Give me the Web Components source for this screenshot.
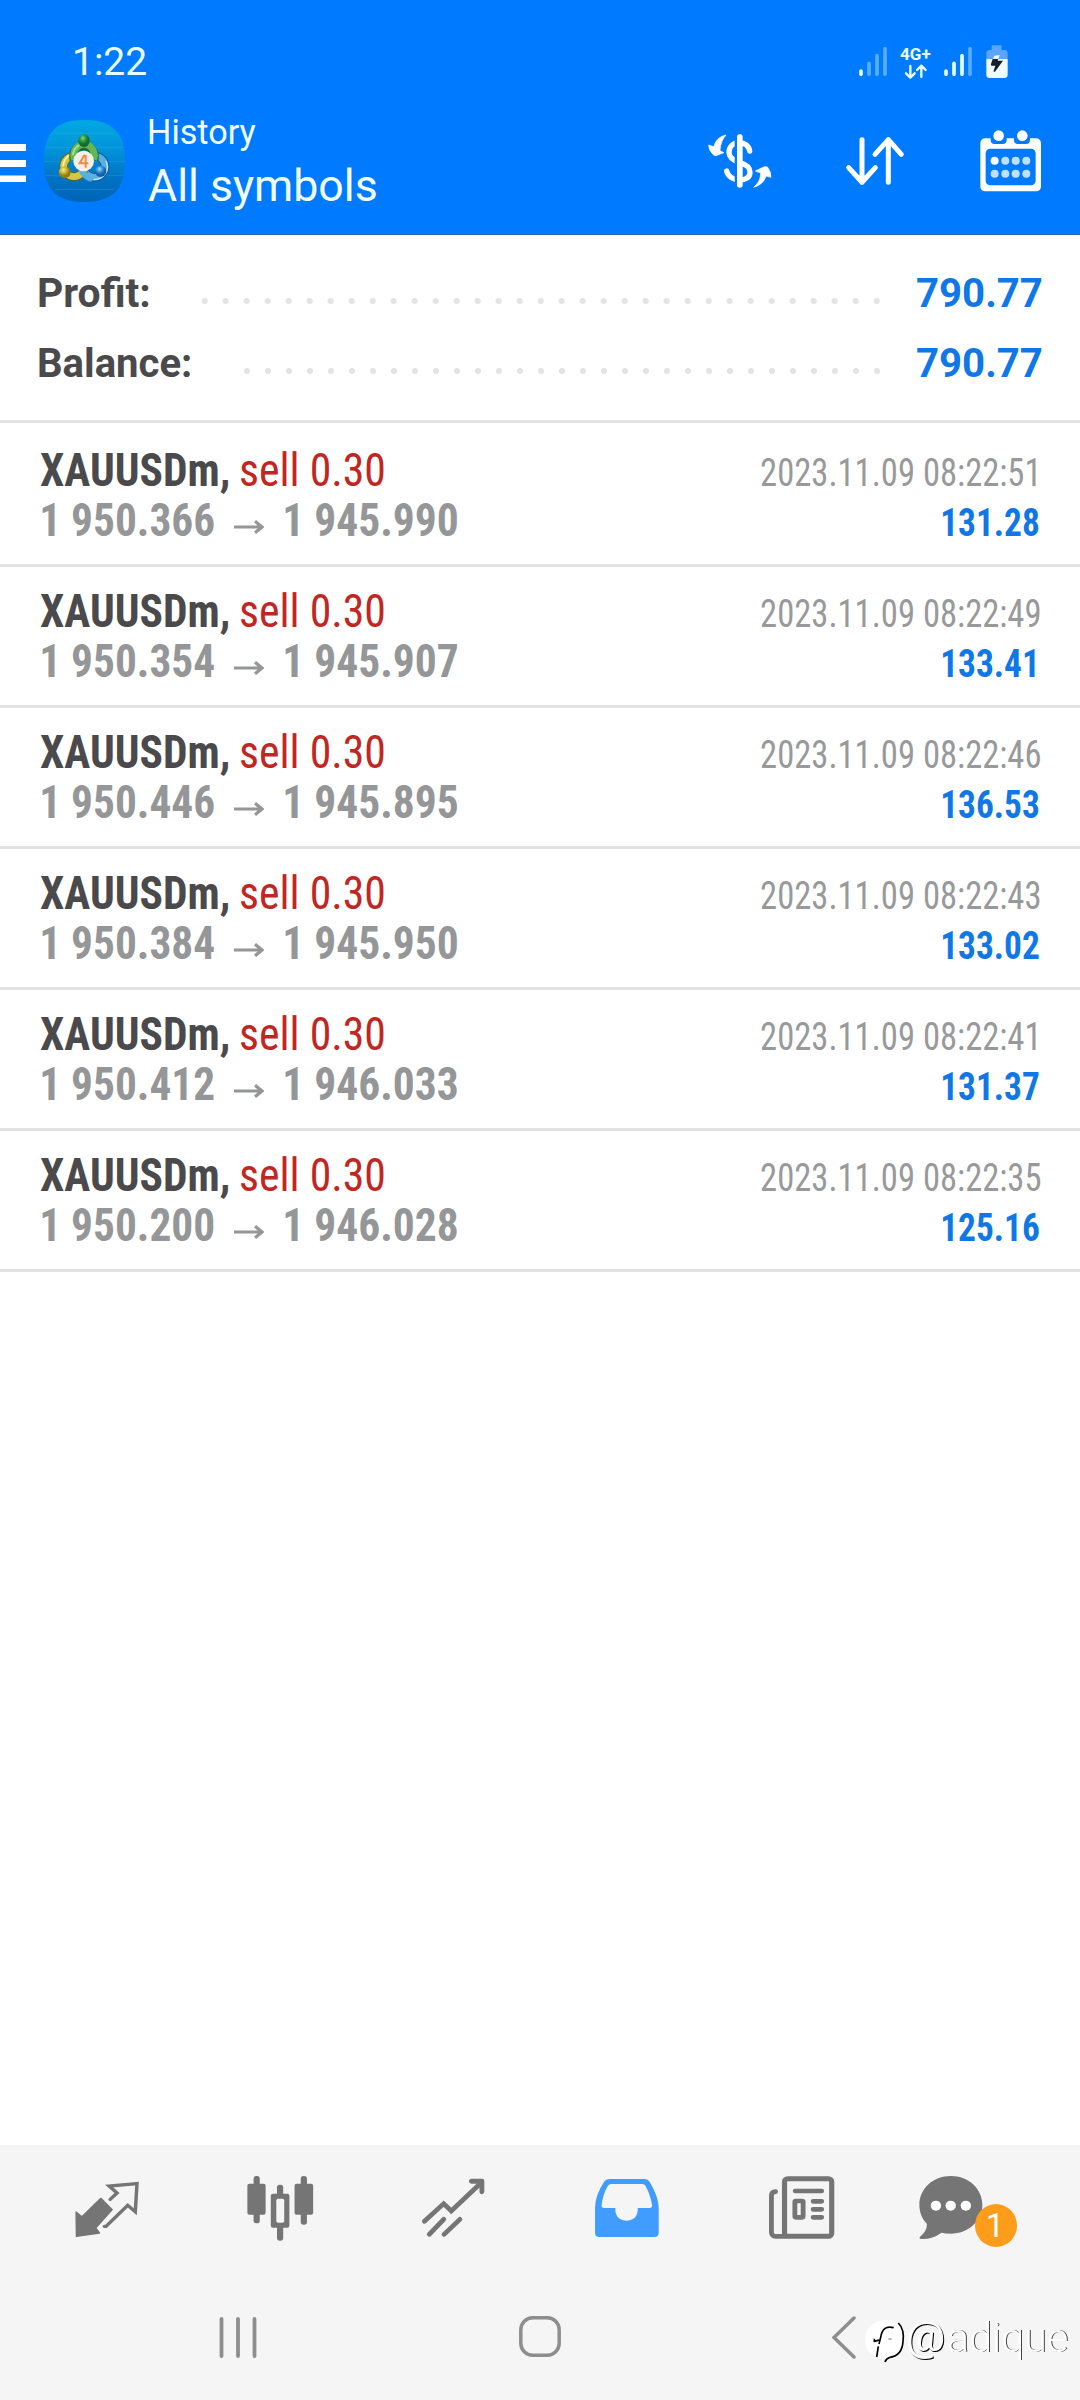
<!DOCTYPE html>
<html lang="en">
<head>
<meta charset="utf-8">
<title>History</title>
<style>
html,body{margin:0;padding:0;background:#fff}
body{width:1080px;height:2400px;overflow:hidden;font-family:Roboto,"Liberation Sans",sans-serif}
</style>
</head>
<body>
<history-app></history-app>
<script>
const ctx = document.createElement('canvas').getContext('2d');

// A line of text whose visible width is w and whose box is exactly the cap height.
class InkText extends HTMLElement {
  connectedCallback() {
    const a = (n, d) => this.getAttribute(n) ?? d;
    const size = +a('size', 40), w = +a('w', 100), weight = a('weight', 400), text = this.textContent;
    const fam = 'Roboto, "Liberation Sans", sans-serif';
    const stretch = a('stretch', 'normal');
    ctx.font = `normal ${weight} ${stretch === 'normal' ? '' : stretch + ' '}${size}px ${fam}`;
    const m = ctx.measureText(a('ref', text));
    const k = w / (m.actualBoundingBoxLeft + m.actualBoundingBoxRight);
    const h = size * .711;
    this.attachShadow({mode: 'open'}).innerHTML = `<style>
      :host{display:block;flex:none;width:${w}px;height:${h}px}
      svg{display:block;overflow:visible;width:100%;height:100%}
      text{font:${weight} ${size}px ${fam};font-stretch:${stretch};fill:currentColor;white-space:pre}
      </style><svg><text transform="translate(${m.actualBoundingBoxLeft * k} ${h}) scale(${k} 1)"></text></svg>`;
    this.shadowRoot.querySelector('text').textContent = text;
  }
}
customElements.define('ink-text', InkText);

// name: [viewBox, width, height, markup]
const ICONS = {
  menu: ['0 0 26 38', 26, 38, `<path fill="#fff" d="M0 0h26v7H0zM0 16h26v7H0zM0 31.5h26v7H0z"/>`],
  logo: ['42 30 243 246', 81, 82, `
    <defs>
      <linearGradient id="bg" x2="0" y2="1"><stop offset="0" stop-color="#02a9e0"/><stop offset=".35" stop-color="#0294db"/><stop offset=".7" stop-color="#0073c4"/><stop offset="1" stop-color="#0064b4"/></linearGradient>
      <radialGradient id="g" cx=".4" cy=".3"><stop offset="0" stop-color="#8fd67c"/><stop offset=".5" stop-color="#2f9b3c"/><stop offset="1" stop-color="#146b2b"/></radialGradient>
      <radialGradient id="y" cx=".4" cy=".3"><stop offset="0" stop-color="#f6ee90"/><stop offset=".5" stop-color="#cdb932"/><stop offset="1" stop-color="#8d7c16"/></radialGradient>
      <radialGradient id="b" cx=".4" cy=".3"><stop offset="0" stop-color="#a8dcfb"/><stop offset=".5" stop-color="#3c97d8"/><stop offset="1" stop-color="#0e5fa8"/></radialGradient>
    </defs>
    <path fill="url(#bg)" d="M163 30C245 30 285 66 285 153S245 276 163 276 42 240 42 153 81 30 163 30Z"/>
    <path stroke="#46b8ea" stroke-opacity=".4" stroke-width="2" d="M75 70H252M46 112H281M42 155H285M46 196H281M75 238H252"/>
    <g fill="none">
      <circle cx="193" cy="170" r="32" stroke="#0b579a" stroke-width="26"/>
      <circle cx="193" cy="170" r="32" stroke="#5aafe2" stroke-width="20"/>
      <path stroke="#c2e4f7" stroke-width="4" d="M228 153A38 38 0 0 1 190 208"/>
      <circle cx="132" cy="169" r="31" stroke="#5d6420" stroke-width="26"/>
      <circle cx="132" cy="169" r="31" stroke="#d3c74a" stroke-width="20"/>
      <path stroke="#f6f0ae" stroke-width="5" d="M100 170A35 35 0 0 1 124 134"/>
      <path stroke="#1c6733" stroke-width="27" d="M132 150A31 34 0 1 1 192 150"/>
      <path stroke="#62b757" stroke-width="21" d="M133 149A31 34 0 1 1 191 149"/>
      <path stroke="#b7e0a8" stroke-width="5" d="M129 136A37 37 0 0 1 148 105"/>
      <path stroke="#5aafe2" stroke-width="18" d="M153 176Q160 200 186 207"/>
    </g>
    <ellipse cx="162" cy="92" rx="17" ry="19" fill="url(#g)"/>
    <circle cx="104" cy="187" r="18" fill="url(#y)"/>
    <circle cx="212" cy="184" r="17" fill="url(#b)"/>
    <circle cx="161" cy="153" r="31" fill="#f3efe9"/>
    <path fill="none" stroke="#ee8c42" stroke-width="6" d="M164 134L149 160H175M167 135V173"/>`],
  dollar: ['80 400 198 168', 66, 56, `
    <path fill="none" stroke="#fff" stroke-width="16" stroke-linecap="round" d="M208 454C206 438 192 429 178 429C158 429 146 441 146 458C146 474 158 482 178 489C199 495 209 502 209 518C209 534 196 541 178 541C158 541 142 529 139 514"/>
    <path fill="#007aff" d="M163 415h22v138h-22z"/><rect x="170" y="404" width="17" height="160" rx="7" fill="#fff"/>
    <path fill="#fff" stroke="#fff" stroke-width="2" stroke-linejoin="round" d="M137 406C117 410 104 424 101 441L85 436Q85 451 96 462Q101 469 107 468L131 459L119 453C120 432 127 418 137 406ZM220 563C240 557 253 545 257 529L272 533Q272 516 262 503Q257 500 252 501L225 514L241 520C240 541 232 552 220 563Z"/>`],
  sort: ['496 406 180 154', 60, 51.3, `<path fill="none" stroke="#fff" stroke-width="15" stroke-linecap="round" stroke-linejoin="round" d="M547 420V548M507 504L547 548L587 504M626 548V420M586 464L626 420L665 464"/>`],
  calendar: ['896 386 190 190', 63.3, 63.3, `
    <rect x="900" y="414" width="182" height="159" rx="14" fill="#fff"/>
    <path fill="#007aff" d="M931 410h48v9q0 12-12 12h-24q-12 0-12-12zM1001 410h48v9q0 12-12 12h-24q-12 0-12-12z"/>
    <rect x="916" y="445" width="150" height="110" rx="14" fill="#007aff"/>
    <circle cx="955" cy="406" r="16" fill="#fff"/><circle cx="1026" cy="406" r="16" fill="#fff"/>
    <g fill="#bfe1ff"><circle cx="943" cy="481" r="12" fill="#fff"/><circle cx="975" cy="481" r="12"/><circle cx="1006" cy="481" r="12"/><circle cx="1038" cy="481" r="12"/><circle cx="943" cy="520" r="12"/><circle cx="975" cy="520" r="12"/><circle cx="1006" cy="520" r="12"/><circle cx="1038" cy="520" r="12"/></g>`],
  signal1: ['540 138 84 92', 28, 30.7, `<path stroke="#59aeff" stroke-width="11" stroke-linecap="round" d="M570 190V223M594 167V223M618 146V223"/><path stroke="#e8ffff" stroke-width="11" stroke-linecap="round" d="M546 213V223"/>`],
  signal2: ['792 138 84 92', 28, 30.7, `<path stroke="#59aeff" stroke-width="11" stroke-linecap="round" d="M870 146V223"/><path stroke="#e8ffff" stroke-width="11" stroke-linecap="round" d="M798 213V223M822 190V223M846 167V223"/>`],
  data: ['672 190 72 46', 24, 15.3, `<path fill="none" stroke="#e8ffff" stroke-width="7" stroke-linecap="round" stroke-linejoin="round" d="M691 196V231M678 218L691 231L704 218M724 229V195M711 208L724 195L737 208"/>`],
  battery: ['920 135 66 100', 22, 33.3, `<path fill="#59a5ff" d="M937 140q0-4 4-4h22q4 0 4 4v10h8q10 0 10 10v17H921v-17q0-10 10-10h6z"/><path fill="#f0fbff" d="M921 177h64v47q0 10-10 10h-44q-10 0-10-10zM945 167l16-2-4 12h-16z"/><path fill="#14202b" d="M940 177H957L955 182H971L947 215Q942 217 943 212L948 197H937Q933 196 935 192Z"/>`],
  quotes: ['216 150 194 174', 66.8, 58, `<path fill="none" stroke="#757575" stroke-width="10" stroke-linejoin="miter" stroke-linecap="round" d="M321 208L341 189L318 168L399 161L394 245L372 226L309 289H304"/><path fill="#757575" stroke="#757575" stroke-width="4" stroke-linejoin="round" d="M294 205L327 239L279 294L290 309L223 319L222 246L239 260Z"/>`],
  candles: ['714 136 198 200', 68.2, 66.7, `<g fill="#757575"><rect x="718" y="162" width="53" height="93" rx="6"/><rect x="855" y="162" width="54" height="93" rx="6"/><rect x="736" y="139" width="18" height="142" rx="8"/><rect x="873" y="139" width="18" height="146" rx="8"/><rect x="804" y="165" width="18" height="168" rx="8"/><rect x="786" y="192" width="54" height="102" rx="6"/></g><rect x="802" y="207" width="23" height="72" rx="5" fill="#f5f5f5"/>`],
  trend: ['1222 142 188 184', 64.7, 61.3, `<path fill="none" stroke="#757575" stroke-width="14" stroke-linecap="round" d="M1232 275L1288 222L1310 244L1396 160M1246 314L1288 269M1289 314L1335 269"/><path fill="#757575" d="M1368 147H1400Q1406 147 1406 154V187Q1404 194 1398 194Q1392 193 1392 187V162H1368Q1361 160 1361 154Q1362 148 1368 147Z"/>`],
  inbox: ['158 144 190 180', 65.4, 60, `<path fill="#419cff" fill-rule="evenodd" d="M204 147H304Q315 147 320 156Q345 200 346 232V308Q346 321 333 321H174Q161 321 161 308V232Q162 195 187 156Q192 147 204 147ZM208 162Q202 162 198 168Q183 195 180 226Q180 234 187 234H220V241C221 283 284 283 285 241V234H320Q327 234 327 226Q322 195 308 168Q305 162 298 162Z"/>`],
  news: ['662 136 196 196', 67.5, 65.3, `<g fill="none" stroke="#757575" stroke-linecap="round"><rect x="710" y="147" width="137" height="173" rx="9" stroke-width="15"/><path stroke-width="14" d="M684 186Q672 187 672 198V309Q673 320 684 320H712M741 184H818M793 215H818M793 239H818M793 263H818"/><rect x="740" y="214" width="24" height="49" rx="3" stroke-width="14"/></g>`],
  chat: ['1098 136 190 196', 65.4, 65.3, `<path fill="#757575" d="M1193 139C1246 139 1285 178 1285 226C1285 274 1244 312 1193 312Q1178 312 1166 309Q1140 329 1108 328Q1099 326 1104 321Q1124 305 1124 283C1110 268 1102 249 1102 226C1102 178 1141 139 1193 139Z"/><g fill="#fff"><ellipse cx="1150" cy="228" rx="15" ry="15"/><ellipse cx="1193" cy="228" rx="15" ry="15"/><ellipse cx="1237" cy="228" rx="15" ry="15"/></g>`],
  arrow: ['0 0 30 14', 30, 14, `<path fill="none" stroke="#949698" stroke-width="3.2" d="M0 7H28M21 1.2L28 7L21 12.8"/>`],
  recents: ['0 0 38 41', 38, 41, `<path stroke="#8e8e8e" stroke-width="3.8" stroke-linecap="round" d="M2.5 2V39M19 2V39M35.5 2V39"/>`],
  home: ['0 0 42 41', 42, 41, `<rect x="1.8" y="1.8" width="38.4" height="37.4" rx="12" fill="none" stroke="#8e8e8e" stroke-width="3.5"/>`],
  back: ['0 0 24 43', 24, 43, `<path fill="none" stroke="#8e8e8e" stroke-width="3.5" stroke-linecap="round" d="M22 2L2 21.5L22 41"/>`],
  mark: ['72 55 126 138', 42, 46, `<path fill="#fff" d="M136 62C170 60 192 82 192 117C192 152 170 172 148 176L136 184L134 174C98 176 75 152 75 120C75 86 100 62 136 62Z"/><path fill="none" stroke="#000" stroke-width="5" d="M175 70C189 84 192 104 189 126C187 155 172 170 150 173Q138 177 135 187M161 84C138 78 126 88 122 113L117 133M115 140L110 172M103 117V127M103 125L118 121"/><path stroke="#555" stroke-width="2.5" d="M145 118h10"/>`]
};
class UiIcon extends HTMLElement {
  connectedCallback() {
    const [vb, w, h, body] = ICONS[this.getAttribute('name')];
    this.attachShadow({mode: 'open'}).innerHTML = `<style>:host{display:block;flex:none;width:${w}px;height:${h}px}svg{display:block;width:100%;height:100%}</style><svg viewBox="${vb}" preserveAspectRatio="none">${body}</svg>`;
  }
}
customElements.define('ui-icon', UiIcon);

const define = (tag, html) => customElements.define(tag, class extends HTMLElement {
  connectedCallback() {
    this.attachShadow({mode: 'open'}).innerHTML = typeof html === 'function' ? html(this) : html;
  }
});

define('status-bar', `<style>
  :host{display:flex;box-sizing:border-box;height:100px;padding:45px 72px 0 75px;color:#e8ffff;align-items:flex-start}
  .sys{display:flex;margin-left:auto;align-items:flex-start}
  .net{display:flex;flex-direction:column;gap:4.4px;margin:3.7px 12.3px 0 13px;width:31px;align-items:center}
  </style>
  <ink-text size="39.5" w="71" style="margin-top:1.5px">1:22</ink-text>
  <div class="sys">
    <ui-icon name="signal1" style="margin-top:1px"></ui-icon>
    <div class="net"><ink-text size="16" weight="700" w="31">4G+</ink-text><ui-icon name="data"></ui-icon></div>
    <ui-icon name="signal2" style="margin-top:1px"></ui-icon>
    <ui-icon name="battery" style="margin-left:14.3px"></ui-icon>
  </div>`);

define('app-bar', `<style>
  :host{display:flex;box-sizing:border-box;height:135px;padding:20px 38px 0 0;align-items:flex-start;color:#fff;border-bottom:1.5px solid #2268ae}
  .t{display:flex;flex-direction:column;gap:26.7px;margin:-1px 0 0 24px;color:#f2ffff}
  .a{display:flex;margin-left:auto;align-items:flex-start}
  </style>
  <ui-icon name="menu" style="margin-top:24px"></ui-icon>
  <ui-icon name="logo" style="margin-left:18px"></ui-icon>
  <div class="t"><ink-text size="34.5" w="106.5">History</ink-text><ink-text size="44" w="228" style="margin-left:-1.5px">All symbols</ink-text></div>
  <div class="a">
    <ui-icon name="dollar" style="margin-top:13.3px"></ui-icon>
    <ui-icon name="sort" style="margin:15.3px 0 0 72.6px"></ui-icon>
    <ui-icon name="calendar" style="margin:8.7px 0 0 73.4px"></ui-icon>
  </div>`);

define('summary-line', el => `<style>
  :host{display:flex;height:70px;align-items:flex-start;color:#4a4a4c}
  .dots{flex:1;height:6px;margin:20.2px 37px 0 52px;background:radial-gradient(circle at 18px 3px,#e4e4e4 2.7px,transparent 3.4px) right top/21px 6px repeat-x}
  .v{color:#1078e6}
  </style>
  <ink-text size="40.5" weight="700" w="${el.getAttribute('w')}">${el.getAttribute('label')}</ink-text>
  <div class="dots"></div>
  <ink-text class="v" size="40.5" weight="700" w="124.7">${el.getAttribute('value')}</ink-text>`);

define('trade-row', el => {
  const [open, close, time, profit] = el.textContent.split('|');
  return `<style>
  :host{display:flex;justify-content:space-between;box-sizing:border-box;height:141px;padding:27.5px 41px 0;border-bottom:3px solid #e3e3e3}
  .l,.r{display:flex;flex-direction:column}
  .l{gap:18.4px}
  .r{gap:23.2px;padding-top:5.4px;align-items:flex-end}
  .line{display:flex;align-items:flex-start}
  .sym{color:#4a4a4c;margin-left:-1px}.side{color:#c22623;margin-left:12.7px}
  .price{color:#949698}.time{color:#98999b;margin-right:4px}.profit{color:#1078e6}
  </style>
  <div class="l">
    <div class="line"><ink-text class="sym" size="45.5" weight="700" stretch="condensed" w="188.3">XAUUSDm,</ink-text><ink-text class="side" size="45.5" stretch="condensed" w="142.6">sell 0.30</ink-text></div>
    <div class="line price" style="padding-left:1.2px"><ink-text size="45.5" weight="700" stretch="condensed" ref="1 950.366" w="172.3">${open}</ink-text><ui-icon name="arrow" style="margin:16px 20.4px 0 20px"></ui-icon><ink-text size="45.5" weight="700" stretch="condensed" ref="1 945.990" w="172">${close}</ink-text></div>
  </div>
  <div class="r">
    <ink-text class="time" size="38" stretch="condensed" ref="2023.11.09 08:22:51" w="274.5">${time}</ink-text>
    <ink-text class="profit" size="38" weight="700" stretch="condensed" ref="131.28" w="96.7">${profit}</ink-text>
  </div>`;
});

define('tab-bar', `<style>
  :host{display:flex;box-sizing:border-box;height:135px;padding-left:74.4px;align-items:flex-start;background:#f5f5f5}
  .chat{position:relative;margin:30.3px 0 0 82.5px}
  .badge{position:absolute;left:56.8px;top:28.5px;width:42px;height:43px;border-radius:50%;background:#ff9c1a;color:#fff;display:flex;align-items:center;justify-content:center}
  </style>
  <ui-icon name="quotes" style="margin-top:35px"></ui-icon>
  <ui-icon name="candles" style="margin:30.3px 0 0 104.7px"></ui-icon>
  <ui-icon name="trend" style="margin:32.3px 0 0 106.7px"></ui-icon>
  <ui-icon name="inbox" style="margin:33px 0 0 109px"></ui-icon>
  <ui-icon name="news" style="margin:30.3px 0 0 108.1px"></ui-icon>
  <div class="chat"><ui-icon name="chat"></ui-icon><div class="badge"><ink-text size="33.8" w="10.5" style="margin-right:4px">1</ink-text></div></div>`);

define('nav-bar', `<style>
  :host{display:flex;box-sizing:border-box;height:120px;padding:36.5px 0 0 219px;align-items:flex-start;background:#f5f5f5}
  .wm{display:flex;align-items:flex-start;margin-left:8px;color:#fff}
  .at{filter:drop-shadow(1.4px 1px 0 #000)}
  .nm{filter:drop-shadow(1px .7px 0 #444)}
  </style>
  <ui-icon name="recents"></ui-icon>
  <ui-icon name="home" style="margin:-.5px 0 0 262px"></ui-icon>
  <ui-icon name="back" style="margin:-1px 0 0 270.5px"></ui-icon>
  <div class="wm"><ui-icon name="mark" style="margin-top:1.3px"></ui-icon><ink-text class="at" size="41" w="35.5" style="margin:5px 0 0 2.5px">@</ink-text><ink-text class="nm" size="41.5" weight="300" w="118" style="margin:5px 0 0 5px">adique</ink-text></div>`);

const trades = [
  '1 950.366|1 945.990|2023.11.09 08:22:51|131.28',
  '1 950.354|1 945.907|2023.11.09 08:22:49|133.41',
  '1 950.446|1 945.895|2023.11.09 08:22:46|136.53',
  '1 950.384|1 945.950|2023.11.09 08:22:43|133.02',
  '1 950.412|1 946.033|2023.11.09 08:22:41|131.37',
  '1 950.200|1 946.028|2023.11.09 08:22:35|125.16'
];
define('history-app', `<style>
  :host{display:flex;flex-direction:column;width:1080px;height:2400px;background:#fff}
  header{background:#007aff}
  .sum{box-sizing:border-box;height:188px;padding:43.2px 38.3px 0 39px;border-bottom:3px solid #e3e3e3}
  main{flex:1;padding-top:3px}
  </style>
  <header><status-bar></status-bar><app-bar></app-bar></header>
  <section class="sum"><summary-line label="Profit:" w="109.4" value="790.77"></summary-line><summary-line label="Balance:" w="151" value="790.77"></summary-line></section>
  <main>${trades.map(t => `<trade-row>${t}</trade-row>`).join('')}</main>
  <tab-bar></tab-bar><nav-bar></nav-bar>`);
</script>
</body>
</html>
